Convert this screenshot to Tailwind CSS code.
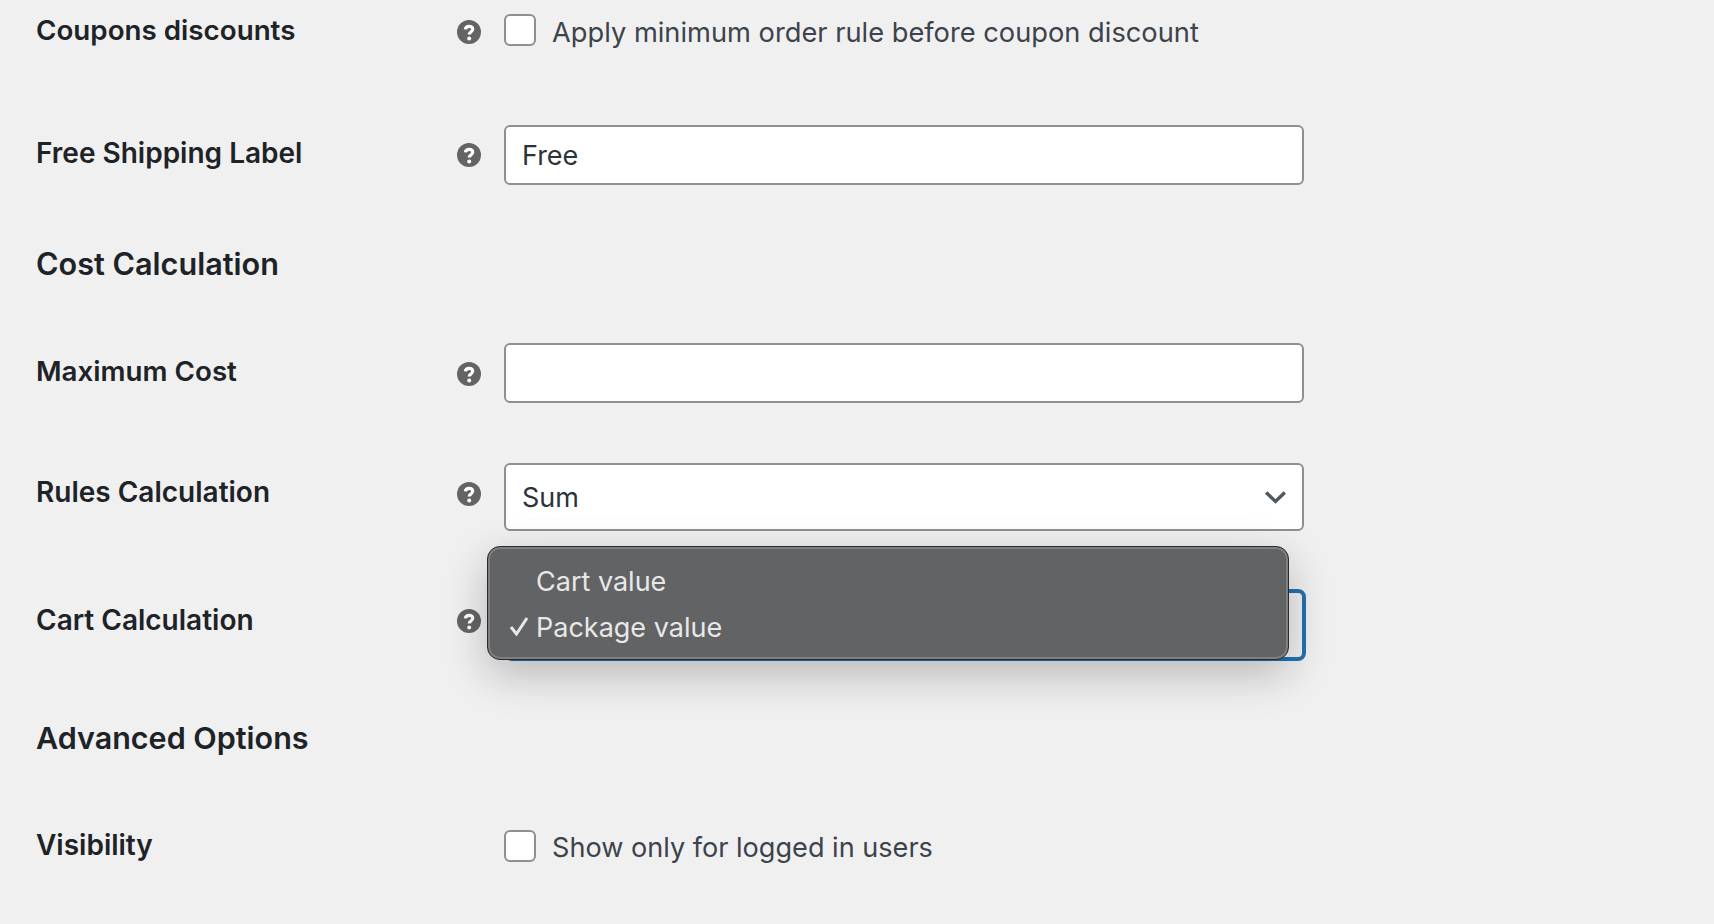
<!DOCTYPE html>
<html lang="en">
<head>
<meta charset="UTF-8">
<title>Shipping settings</title>
<script src="https://cdn.jsdelivr.net/npm/@tailwindcss/browser@4"></script>
</head>
<body class="bg-[#f0f0f1] font-['Inter',sans-serif] h-[924px] overflow-hidden">
<main class="flex flex-col pl-[36px] pt-[14px]">

  <!-- Coupons discounts -->
  <div class="flex items-center h-[32px]">
    <label class="w-[421px] pt-[1px] text-[27.75px] font-semibold text-[#1d2327]">Coupons discounts</label>
    <svg class="w-[24px] h-[24px] mt-[4px]" viewBox="0 0 24 24"><circle cx="12" cy="12" r="12" fill="#646464"/><path d="M8.400 9.400c.2-2 1.700-3.100 3.700-3.100s3.600 1.100 3.600 3c0 2.700-3.500 2.700-3.500 5.200" fill="none" stroke="#fff" stroke-width="3.200"/><circle cx="12.200" cy="18.400" r="2" fill="#fff"/></svg>
    <input type="checkbox" class="appearance-none ml-[23px] w-[32px] h-[32px] bg-white border-2 border-[#8c8f94] rounded-[6px]">
    <span class="ml-[16px] mt-[6px] text-[27.25px] text-[#3c434a]">Apply minimum order rule before coupon discount</span>
  </div>

  <!-- Free Shipping Label -->
  <div class="flex items-center h-[59px] mt-[79px]">
    <label class="w-[421px] pb-[3px] text-[28px] font-semibold text-[#1d2327]">Free Shipping Label</label>
    <svg class="w-[24px] h-[24px]" viewBox="0 0 24 24"><circle cx="12" cy="12" r="12" fill="#646464"/><path d="M8.400 9.400c.2-2 1.700-3.100 3.700-3.100s3.600 1.100 3.600 3c0 2.700-3.500 2.700-3.500 5.200" fill="none" stroke="#fff" stroke-width="3.200"/><circle cx="12.200" cy="18.400" r="2" fill="#fff"/></svg>
    <input type="text" value="Free" class="ml-[23px] w-[800px] h-[60px] pl-[16px] pr-[17px] pt-[2px] bg-white border-2 border-[#8c8f94] rounded-[6px] text-[27px] text-[#2c3338]">
  </div>

  <!-- Cost Calculation -->
  <h2 class="mt-[59px] text-[30.6px] leading-[42px] font-semibold text-[#1d2327]">Cost Calculation</h2>

  <!-- Maximum Cost -->
  <div class="flex items-center h-[60px] mt-[58px]">
    <label class="w-[421px] pb-[2px] text-[27.75px] font-semibold text-[#1d2327]">Maximum Cost</label>
    <svg class="w-[24px] h-[24px] mt-[1px]" viewBox="0 0 24 24"><circle cx="12" cy="12" r="12" fill="#646464"/><path d="M8.400 9.400c.2-2 1.700-3.100 3.700-3.100s3.600 1.100 3.600 3c0 2.700-3.500 2.700-3.500 5.200" fill="none" stroke="#fff" stroke-width="3.200"/><circle cx="12.200" cy="18.400" r="2" fill="#fff"/></svg>
    <input type="text" class="ml-[23px] w-[800px] h-[60px] px-[17px] bg-white border-2 border-[#8c8f94] rounded-[6px] text-[27px] text-[#2c3338]">
  </div>

  <!-- Rules Calculation -->
  <div class="flex items-center h-[68px] mt-[60px]">
    <label class="w-[421px] pb-[10px] text-[28px] font-semibold text-[#1d2327]">Rules Calculation</label>
    <svg class="w-[24px] h-[24px] mb-[6px]" viewBox="0 0 24 24"><circle cx="12" cy="12" r="12" fill="#646464"/><path d="M8.400 9.400c.2-2 1.700-3.100 3.700-3.100s3.600 1.100 3.600 3c0 2.700-3.500 2.700-3.500 5.200" fill="none" stroke="#fff" stroke-width="3.200"/><circle cx="12.200" cy="18.400" r="2" fill="#fff"/></svg>
    <div class="ml-[23px] w-[800px] h-[68px] pl-[16px] pr-[17px] flex items-center justify-between bg-white border-2 border-[#8c8f94] rounded-[6px] text-[27px] text-[#2c3338]">
      <span class="mt-[2px]">Sum</span>
      <svg class="w-[21px] h-[13px] mr-[-1px]" viewBox="0 0 21 13"><path d="M1.200 1.500 10.500 10.500 19.800 1.500" fill="none" stroke="#50575e" stroke-width="3.400"/></svg>
    </div>
  </div>

  <!-- Cart Calculation, its native menu is open -->
  <div class="relative flex items-center h-[72px] mt-[58px]">
    <label class="w-[421px] pb-[10px] text-[28px] font-semibold text-[#1d2327]">Cart Calculation</label>
    <svg class="w-[24px] h-[24px] mb-[8px]" viewBox="0 0 24 24"><circle cx="12" cy="12" r="12" fill="#646464"/><path d="M8.400 9.400c.2-2 1.700-3.100 3.700-3.100s3.600 1.100 3.600 3c0 2.700-3.500 2.700-3.500 5.200" fill="none" stroke="#fff" stroke-width="3.200"/><circle cx="12.200" cy="18.400" r="2" fill="#fff"/></svg>
    <div class="ml-[23px] w-[802px] h-[72px] border-[4px] border-[#2271b1] rounded-[8px]"></div>
    <div class="absolute left-[451px] top-[-43px] w-[802px] h-[114px] pt-[4px] flex flex-col justify-center bg-[#626365] border border-[#2a2a2c] rounded-[13px] shadow-[0_14px_44px_rgba(0,0,0,0.24),inset_0_0_0_2px_rgba(255,255,255,0.18)] text-[27px] text-[#e8e8e8]">
      <div class="h-[46px] pl-[48px] flex items-center">Cart value</div>
      <div class="relative h-[46px] pl-[48px] flex items-center">
        <svg class="absolute left-[21px] top-[11px] w-[20px] h-[20px]" viewBox="0 0 20 20"><path d="M2 11 7.500 18 18 2" fill="none" stroke="#e8e8e8" stroke-width="3"/></svg>
        Package value
      </div>
    </div>
  </div>

  <!-- Advanced Options -->
  <h2 class="mt-[56px] text-[30.5px] leading-[42px] font-semibold text-[#1d2327]">Advanced Options</h2>

  <!-- Visibility -->
  <div class="flex items-center h-[32px] mt-[71px]">
    <label class="w-[468px] pb-[2px] text-[28px] font-semibold text-[#1d2327]">Visibility</label>
    <input type="checkbox" class="appearance-none w-[32px] h-[32px] bg-white border-2 border-[#8c8f94] rounded-[6px]">
    <span class="ml-[16px] mt-[4px] text-[27.1px] text-[#3c434a]">Show only for logged in users</span>
  </div>

</main>
</body>
</html>
